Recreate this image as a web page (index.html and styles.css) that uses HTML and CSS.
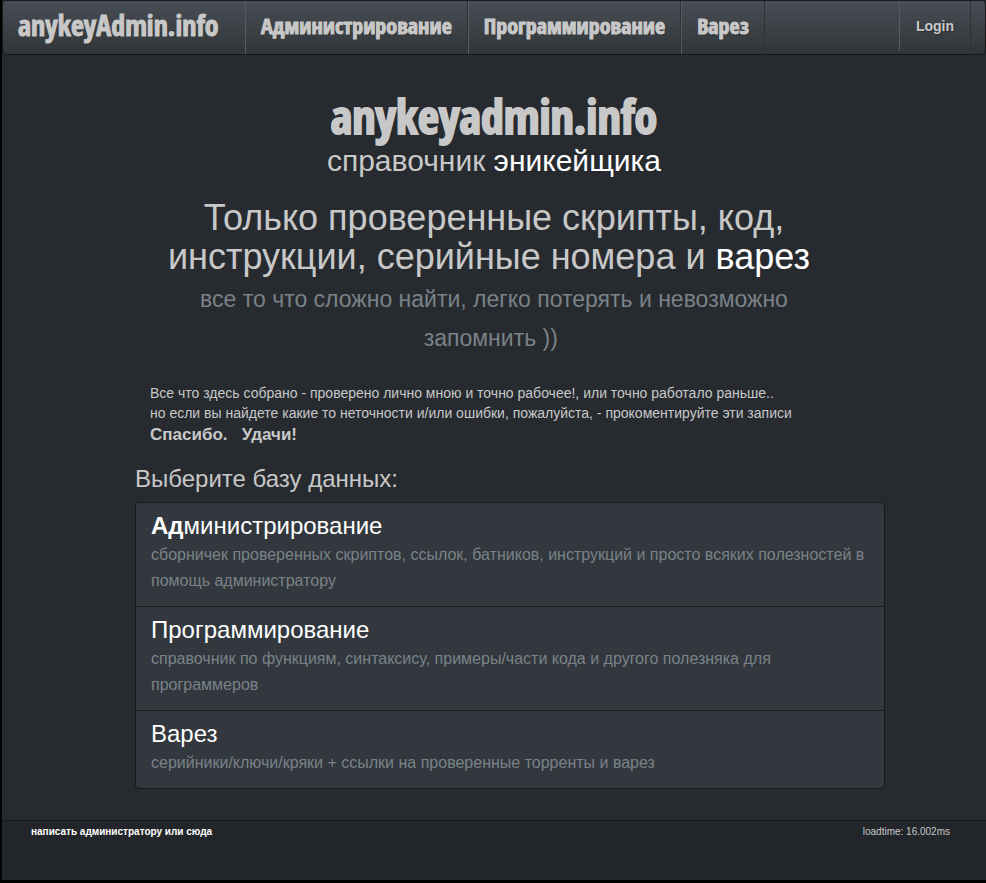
FILE: index.html
```html
<!DOCTYPE html>
<html lang="ru">
<head>
<meta charset="utf-8">
<title>anykeyAdmin.info</title>
<link rel="stylesheet" href="styles.css">
</head>
<body>
<nav class="navbar">
  <a class="brand" href="#">anykeyAdmin.info</a>
  <ul class="menu">
    <li><a href="#">Администрирование</a></li>
    <li><a href="#">Программирование</a></li>
    <li><a href="#">Варез</a></li>
  </ul>
  <a class="login" href="#">Login</a>
</nav>
<main>
  <header class="hero">
    <h1>anykeyadmin.info</h1>
    <p class="subtitle">справочник <a href="#">эникейщика</a></p>
    <h2>Только проверенные скрипты, код,<br>инструкции, серийные номера и <a href="#">варез</a>&nbsp;</h2>
    <p class="tagline">все то что сложно найти, легко потерять и невозможно<br>запомнить ))&nbsp;</p>
  </header>
  <section class="content">
    <p class="note">Все что здесь собрано - проверено лично мною и точно рабочее!, или точно работало раньше..<br>но если вы найдете какие то неточности и/или ошибки, пожалуйста, - прокоментируйте эти записи</p>
    <p class="thanks">Спасибо. &nbsp; Удачи!</p>
    <h3>Выберите базу данных:</h3>
    <div class="list">
      <a class="item" href="#">
        <span class="item-title"><b>Ад</b>министрирование</span>
        <span class="item-text">сборничек проверенных скриптов, ссылок, батников, инструкций и просто всяких полезностей в помощь администратору</span>
      </a>
      <a class="item" href="#">
        <span class="item-title">Программирование</span>
        <span class="item-text">справочник по функциям, синтаксису, примеры/части кода и другого полезняка для программеров</span>
      </a>
      <a class="item" href="#">
        <span class="item-title">Варез</span>
        <span class="item-text">серийники/ключи/кряки + ссылки на проверенные торренты и варез</span>
      </a>
    </div>
  </section>
</main>
<footer>
  <a href="#">написать администратору или сюда</a>
  <span>loadtime: 16.002ms</span>
</footer>
</body>
</html>
```
FILE: styles.css
```css
* { box-sizing: border-box; }

body {
  margin: 0;
  min-height: 100vh;
  display: flex;
  flex-direction: column;
  border-left: 2px solid #000;
  border-bottom: 3px solid #000;
  background: #272b30;
  color: #c8c8c8;
  font: 14px/20px "Liberation Sans", Arial, sans-serif;
}

a { color: #fff; text-decoration: none; }
h1, h2, h3, p, ul { margin: 0; padding: 0; font-weight: normal; }

.navbar {
  display: flex;
  height: 55px;
  border: 1px solid #17191b;
  border-radius: 4px;
  background: linear-gradient(#484e55, #3a3f44 60%, #313539);
  text-shadow: 1px 1px 1px rgba(0, 0, 0, .3);
}
.navbar a { color: #c8c8c8; }

.brand, .menu, h1 {
  font-family: Impact, "Open Sans Condensed", "Liberation Sans Narrow", "DejaVu Sans Condensed", sans-serif;
  font-weight: bold;
  -webkit-text-stroke: 1px #c8c8c8;
}

.brand {
  width: 242px;
  padding: 0 15px;
  font-size: 28px;
  line-height: 48px;
}

.menu { display: flex; list-style: none; font-size: 22px; line-height: 48px; }
.menu a {
  display: block;
  height: 53px;
  padding: 0 15px;
  border-left: 1px solid #575c62;
  border-right: 1px solid #2e3236;
}

.login {
  height: 50px;
  margin-left: auto;
  margin-right: 14px;
  padding: 0 16px;
  border-left: 1px solid #575c62;
  border-right: 1px solid #2e3236;
  font-weight: bold;
  line-height: 50px;
}

main { flex: 1; padding-bottom: 31px; }

.hero { padding-top: 36px; text-align: center; }
h1 { font-size: 46px; line-height: 50px; -webkit-text-stroke-width: 2px; }
.subtitle { margin-top: 4px; font-size: 30px; line-height: 32px; }
h2 { margin-top: 21px; font-size: 36px; line-height: 39px; }
.tagline { margin-top: 4px; font-size: 23px; line-height: 39px; color: #7a8288; }

.content { width: 750px; max-width: 100%; margin: 25px 101px 0 auto; }
.note, .thanks { padding-left: 15px; }
.thanks { font-size: 17px; line-height: 24px; font-weight: bold; }
h3 { margin: 19px 0 10px; font-size: 24px; line-height: 26px; }

.list {
  border: 1px solid #17191b;
  border-radius: 4px;
  background: #32383e;
  overflow: hidden;
}
.item { display: block; padding: 8px 15px 12px; }
.item + .item { border-top: 1px solid #17191b; }
.item-title { display: block; margin-bottom: 2px; font-size: 24px; line-height: 29px; }
.item-text {
  display: block;
  font-size: 16px;
  line-height: 26px;
  color: #7a8288;
}

footer {
  display: flex;
  justify-content: space-between;
  height: 60px;
  padding: 5px 36px 0 29px;
  border-top: 1px solid #17191b;
  background: #222529;
  font-size: 10px;
  line-height: 12px;
}
footer a { font-weight: bold; }
```
